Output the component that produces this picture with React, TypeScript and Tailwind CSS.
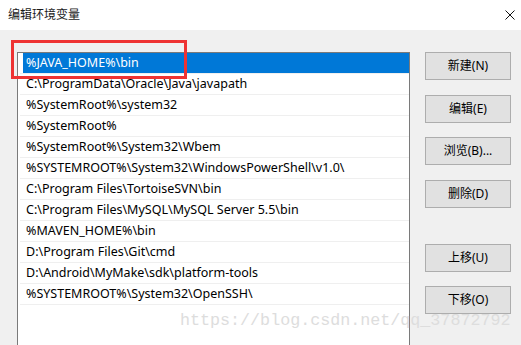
const paths = [
  '%JAVA_HOME%\\bin',
  'C:\\ProgramData\\Oracle\\Java\\javapath',
  '%SystemRoot%\\system32',
  '%SystemRoot%',
  '%SystemRoot%\\System32\\Wbem',
  '%SYSTEMROOT%\\System32\\WindowsPowerShell\\v1.0\\',
  'C:\\Program Files\\TortoiseSVN\\bin',
  'C:\\Program Files\\MySQL\\MySQL Server 5.5\\bin',
  '%MAVEN_HOME%\\bin',
  'D:\\Program Files\\Git\\cmd',
  'D:\\Android\\MyMake\\sdk\\platform-tools',
  '%SYSTEMROOT%\\System32\\OpenSSH\\',
  '',
];

const buttons = [
  { label: '新建(N)', mt: 'mt-0' },
  { label: '编辑(E)', mt: 'mt-[15px]' },
  { label: '浏览(B)...', mt: 'mt-[14px]' },
  { label: '删除(D)', mt: 'mt-[15px]' },
  { label: '上移(U)', mt: 'mt-[36px]' },
  { label: '下移(O)', mt: 'mt-[14px]' },
];

const uiFont = "font-['Noto_Sans','Noto_Sans_CJK_SC',sans-serif]";

export default function App() {
  return (
    <div className={`relative w-[521px] h-[345px] overflow-hidden bg-[#f0f0f0] text-black ${uiFont}`}>
      {/* title bar */}
      <div className="h-[30px] bg-white flex items-center justify-between pl-[8px] pr-[6px]">
        <span className="text-[12px] leading-none text-[#1a1a1a]">编辑环境变量</span>
        <svg width="10" height="10" viewBox="0 0 10 10">
          <path d="M0.5 0.5 L9.5 9.5 M9.5 0.5 L0.5 9.5" stroke="#111" strokeWidth="1" />
        </svg>
      </div>

      <div className="flex pl-[17px] pt-[22px]">
        {/* list */}
        <div className="w-[393px] h-[300px] border border-[#7a7a7a] border-b-0 bg-white">
          {paths.map((p, i) => (
            <div
              key={i}
              className={`flex items-center text-[12.5px] whitespace-nowrap ${
                i === 0
                  ? 'h-[20px] ml-[5px] pl-[3px] bg-[#0078d7] text-white'
                  : 'h-[21px] ml-[2px] pl-[6px] border-t border-[#efefef]'
              }`}
            >
              {p}
            </div>
          ))}
        </div>

        {/* buttons */}
        <div className="ml-[15px] flex flex-col">
          {buttons.map((b) => (
            <button
              key={b.label}
              className={`${b.mt} w-[86px] h-[28px] bg-[#e1e1e1] border border-[#adadad] text-[12px] text-black flex items-center justify-center`}
            >
              {b.label}
            </button>
          ))}
        </div>
      </div>

      {/* red highlight box */}
      <div className="absolute left-[11px] top-[40px] w-[176px] h-[39px] border-[3px] border-[#ee3333]" />

      {/* watermark */}
      <div className="absolute left-[180px] top-[313px] text-[16.7px] leading-none text-[#dddddd] font-['Liberation_Mono',monospace] whitespace-nowrap">
        https://blog.csdn.net/qq_37872792
      </div>
    </div>
  );
}
